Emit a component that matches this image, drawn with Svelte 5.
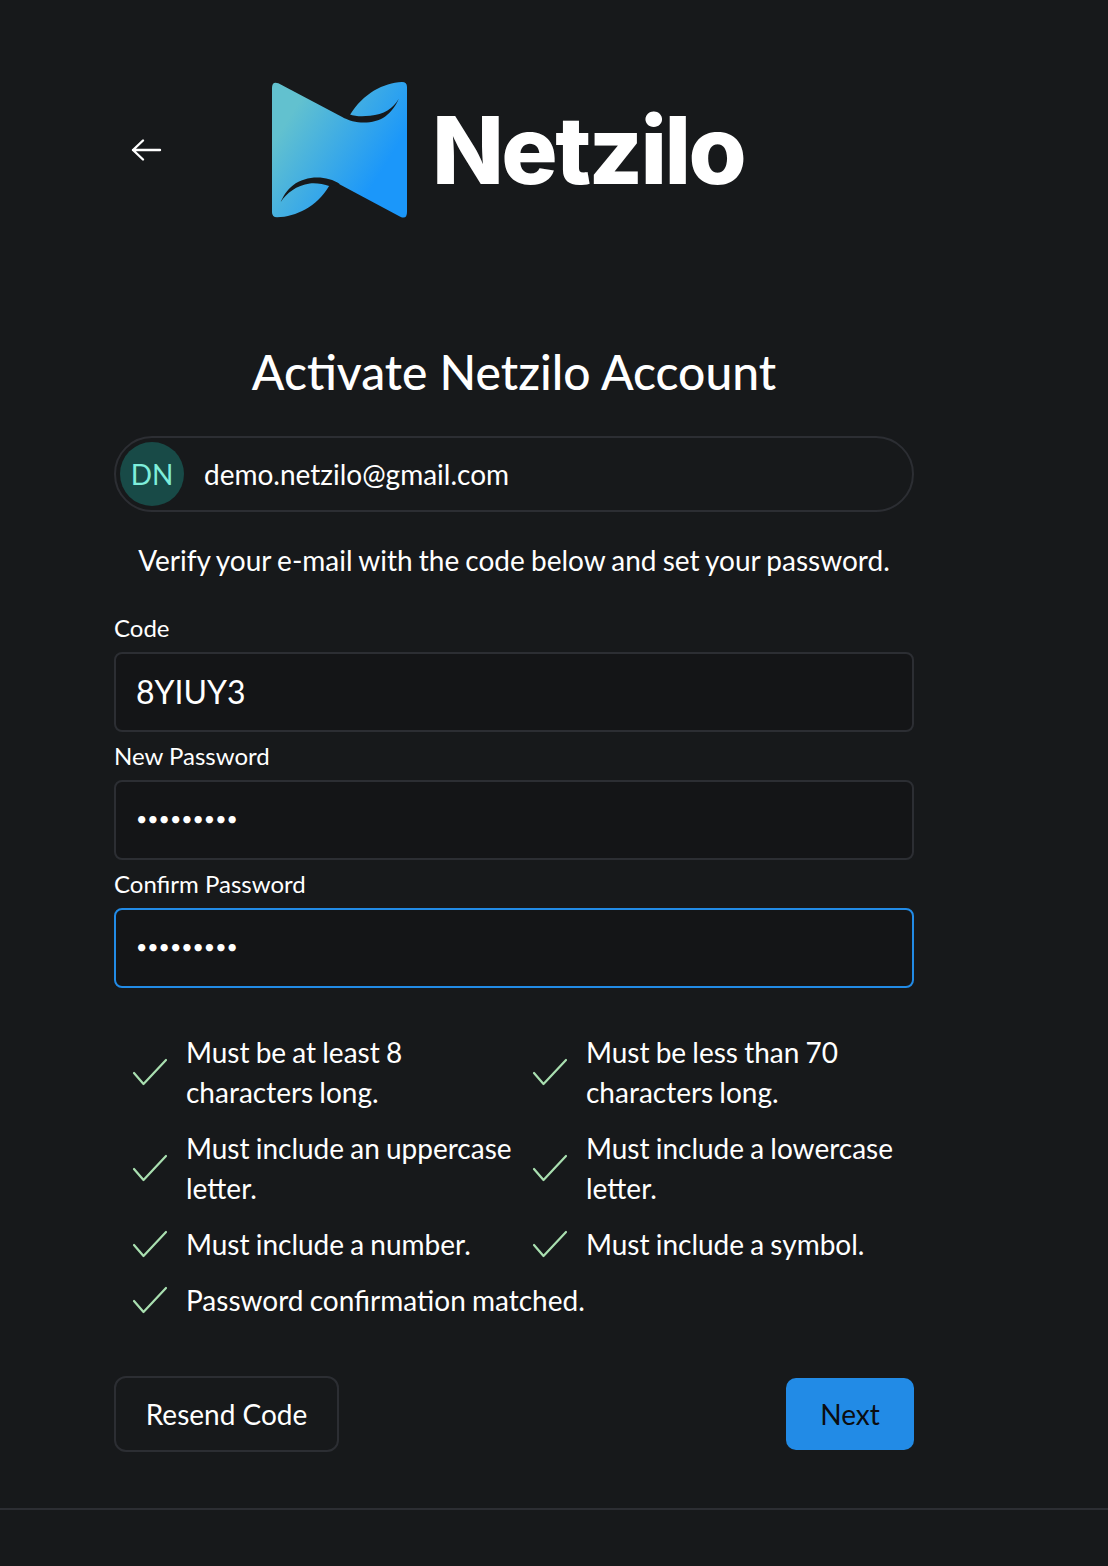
<script>
  const rules = [
    ['Must be at least 8', 'characters long.'],
    ['Must be less than 70', 'characters long.'],
    ['Must include an uppercase', 'letter.'],
    ['Must include a lowercase', 'letter.'],
    ['Must include a number.'],
    ['Must include a symbol.'],
    ['Password confirmation matched.']
  ];
</script>

<div class="page">
  <main class="card">
    <!-- Logo row -->
    <header class="top">
      <button class="back" aria-label="Back">
        <svg width="32" height="24" viewBox="0 0 32 24" fill="none" stroke="#fff" stroke-width="2.4" stroke-linecap="round" stroke-linejoin="round">
          <path d="M29 12H2M12 2.5L2 12l10 9.5" />
        </svg>
      </button>
      <div class="brand">
        <svg class="mark" width="135" height="136" viewBox="487 67 403 406">
          <defs>
            <linearGradient id="netzilo" gradientUnits="userSpaceOnUse" x1="540" y1="170" x2="810" y2="340">
              <stop offset="0" stop-color="#62c1cf" />
              <stop offset="1" stop-color="#1b97fa" />
            </linearGradient>
          </defs>
          <path fill="url(#netzilo)" d="M487 85Q487 64 506 71L705 176L720 165C760 100 820 70 875 67Q890 67 890 82L890 455Q890 478 870 469L680 368L657 378C620 440 560 468 502 471Q487 471 487 456Z" />
          <path fill="#17191b" d="M700 172C730 192 790 195 825 170C845 155 858 135 865 118C850 145 820 165 780 168C755 170 735 170 718 163Z" />
          <path fill="#17191b" d="M690 372C650 345 590 345 550 375C530 390 520 410 513 425C530 400 560 375 600 370C620 368 640 372 660 378Z" />
        </svg>
        <span class="wordmark">Netzilo</span>
      </div>
    </header>

    <h1>Activate Netzilo Account</h1>

    <div class="account">
      <span class="avatar">DN</span>
      <span class="email">demo.netzilo@gmail.com</span>
    </div>

    <p class="hint">Verify your e-mail with the code below and set your password.</p>

    <form class="fields">
      <label>
        <span>Code</span>
        <input type="text" value="8YIUY3" />
      </label>
      <label>
        <span>New Password</span>
        <input type="password" value="Netzilo1!" />
      </label>
      <label>
        <span>Confirm Password</span>
        <input class="focused" type="password" value="Netzilo1!" />
      </label>
    </form>

    <ul class="rules">
      {#each rules as lines}
        <li>
          <svg width="36" height="28" viewBox="0 0 36 28" fill="none" stroke="#a9dfb0" stroke-width="2.2" stroke-linecap="round" stroke-linejoin="round">
            <path d="M2 15l9.5 11L34 2" />
          </svg>
          <span>
            {#each lines as line}
              <span class="line">{line}</span>
            {/each}
          </span>
        </li>
      {/each}
    </ul>

    <div class="actions">
      <button class="resend">Resend Code</button>
      <button class="next">Next</button>
    </div>
  </main>
  <div class="footer"></div>
</div>

<style>
  :global(body) {
    margin: 0;
    background: #17191b;
  }

  .page {
    height: 1566px;
    overflow: hidden;
    font-family: 'Lato', sans-serif;
    color: #fff;
    background: #17191b;
  }

  .card {
    width: 800px;
    margin-left: 114px;
    height: 1508px;
    padding-top: 82px;
    box-sizing: border-box;
  }

  .top {
    display: flex;
    align-items: center;
    height: 136px;
  }

  .back {
    width: 158px;
    height: 48px;
    padding: 0 0 0 17px;
    background: none;
    border: 0;
    display: flex;
    align-items: center;
  }

  .brand {
    display: flex;
    align-items: center;
    gap: 25px;
  }

  .wordmark {
    font-family: 'Inter', sans-serif;
    font-size: 94px;
    font-weight: 800;
    letter-spacing: -2.6px;
    line-height: 1;
  }

  h1 {
    margin: 122px 0 0;
    font-size: 48px;
    font-weight: 500;
    line-height: 64px;
    text-align: center;
  }

  .account {
    margin-top: 32px;
    height: 76px;
    box-sizing: border-box;
    border: 2px solid #2c2e33;
    border-radius: 38px;
    display: flex;
    align-items: center;
    gap: 20px;
    padding-left: 4px;
  }

  .avatar {
    width: 64px;
    height: 64px;
    border-radius: 50%;
    background: #184a47;
    color: #7eeedb;
    font-size: 28px;
    display: flex;
    align-items: center;
    justify-content: center;
  }

  .email {
    font-size: 28px;
  }

  .hint {
    margin: 26px 0 0;
    font-size: 28px;
    line-height: 44px;
    word-spacing: -1px;
    text-align: center;
  }

  .fields {
    margin-top: 22px;
    display: flex;
    flex-direction: column;
  }

  label {
    display: flex;
    flex-direction: column;
  }

  label span {
    font-size: 24px;
    line-height: 48px;
  }

  input {
    height: 80px;
    box-sizing: border-box;
    padding: 0 20px 2px;
    background: #141517;
    border: 2px solid #2c2e33;
    border-radius: 8px;
    color: #fff;
    font-family: inherit;
    font-size: 32px;
    outline: none;
  }

  input[type='password'] {
    padding-bottom: 4px;
    font-size: 19.5px;
  }

  .focused {
    border-color: #228be6;
  }

  .rules {
    list-style: none;
    margin: 44px 0 0;
    padding: 0;
    display: grid;
    grid-template-columns: 400px 400px;
    gap: 16px 0;
  }

  .rules li {
    display: flex;
    align-items: center;
    gap: 18px;
    padding-left: 18px;
    font-size: 28px;
    line-height: 40px;
    word-spacing: -1px;
    white-space: nowrap;
  }

  .rules li:last-child {
    grid-column: 1 / 3;
  }

  .line {
    display: block;
  }

  .actions {
    margin-top: 56px;
    display: flex;
    justify-content: space-between;
    align-items: center;
  }

  button {
    font-family: inherit;
    font-size: 28px;
  }

  .resend {
    width: 225px;
    height: 76px;
    background: none;
    border: 2px solid #2c2e33;
    border-radius: 12px;
    color: #fff;
  }

  .next {
    width: 128px;
    height: 72px;
    background: #228be6;
    border: 0;
    border-radius: 10px;
    color: #0b0d10;
  }

  .footer {
    border-top: 2px solid #2c2e33;
  }
</style>
